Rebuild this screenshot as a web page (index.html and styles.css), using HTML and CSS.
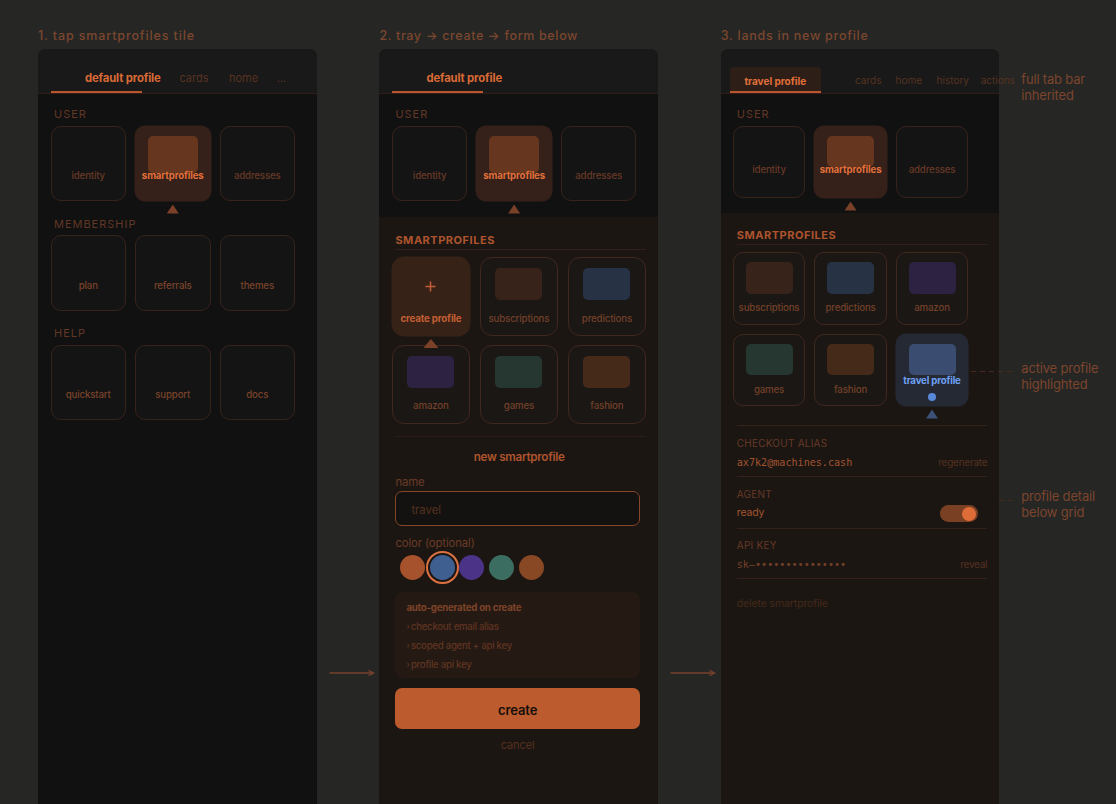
FILE: index.html
```html
<!DOCTYPE html>
<html lang="en">
<head>
<meta charset="utf-8">
<title>smartprofiles flow</title>
<link rel="stylesheet" href="styles.css">
</head>
<body>
<main class="board">
  <section class="step">
    <h2 class="step-title">1. tap smartprofiles tile</h2>
    <div class="phone">
      <nav class="tabs">
        <span class="tab tab-default">default profile</span>
        <span class="tab tab-a">cards</span>
        <span class="tab tab-b">home</span>
        <span class="tab tab-c">...</span>
      </nav>
      <h3 class="group">USER</h3>
      <div class="grid">
        <div class="tile"><span class="label">identity</span></div>
        <div class="tile hot"><i class="swatch"></i><span class="label">smartprofiles</span><i class="pointer"></i></div>
        <div class="tile"><span class="label">addresses</span></div>
      </div>
      <h3 class="group next">MEMBERSHIP</h3>
      <div class="grid bright">
        <div class="tile"><span class="label">plan</span></div>
        <div class="tile"><span class="label">referrals</span></div>
        <div class="tile"><span class="label">themes</span></div>
      </div>
      <h3 class="group next">HELP</h3>
      <div class="grid bright">
        <div class="tile"><span class="label">quickstart</span></div>
        <div class="tile"><span class="label">support</span></div>
        <div class="tile"><span class="label">docs</span></div>
      </div>
    </div>
  </section>

  <div class="connector"><svg width="46" height="10" viewBox="0 0 46 10"><path d="M0.5 5H44.5M39.5 2.3L44.8 5L39.5 7.7"/></svg></div>

  <section class="step">
    <h2 class="step-title tight">2. tray → create → form below</h2>
    <div class="phone">
      <nav class="tabs">
        <span class="tab tab-default">default profile</span>
      </nav>
      <h3 class="group">USER</h3>
      <div class="grid">
        <div class="tile"><span class="label">identity</span></div>
        <div class="tile hot"><i class="swatch"></i><span class="label">smartprofiles</span><i class="pointer"></i></div>
        <div class="tile"><span class="label">addresses</span></div>
      </div>
      <div class="tray">
        <h3 class="tray-title">SMARTPROFILES</h3>
        <div class="grid wide">
          <div class="tile create"><svg class="plus" width="11" height="11" viewBox="0 0 11 11"><path d="M5.5 0.5V10.5M0.5 5.5H10.5"/></svg><span class="label">create profile</span><i class="pointer"></i></div>
          <div class="tile"><i class="swatch rust"></i><span class="label">subscriptions</span></div>
          <div class="tile"><i class="swatch blue"></i><span class="label">predictions</span></div>
          <div class="tile row2"><i class="swatch violet"></i><span class="label">amazon</span></div>
          <div class="tile row2"><i class="swatch green"></i><span class="label">games</span></div>
          <div class="tile row2"><i class="swatch brown"></i><span class="label">fashion</span></div>
        </div>
        <form class="form">
          <h4 class="form-title">new smartprofile</h4>
          <div class="field-label">name</div>
          <div class="input">travel</div>
          <div class="field-label color-label">color (optional)</div>
          <div class="colors">
            <i class="dot c1"></i><i class="dot c2 picked"></i><i class="dot c3"></i><i class="dot c4"></i><i class="dot c5"></i>
          </div>
          <ul class="auto">
            <li class="auto-title">auto-generated on create</li>
            <li><i class="bullet">›</i>checkout email alias</li>
            <li><i class="bullet">›</i>scoped agent + api key</li>
            <li><i class="bullet">›</i>profile api key</li>
          </ul>
          <div class="submit">create</div>
          <div class="cancel">cancel</div>
        </form>
      </div>
    </div>
  </section>

  <div class="connector"><svg width="46" height="10" viewBox="0 0 46 10"><path d="M0.5 5H44.5M39.5 2.3L44.8 5L39.5 7.7"/></svg></div>

  <section class="step">
    <h2 class="step-title last">3. lands in new profile</h2>
    <div class="phone">
      <nav class="tabs compact">
        <span class="tab tab-travel">travel profile</span>
        <span class="tab tab-a">cards</span>
        <span class="tab tab-b">home</span>
        <span class="tab tab-c">history</span>
        <span class="tab tab-d">actions</span>
      </nav>
      <h3 class="group">USER</h3>
      <div class="grid small">
        <div class="tile"><span class="label">identity</span></div>
        <div class="tile hot"><i class="swatch"></i><span class="label">smartprofiles</span><i class="pointer"></i></div>
        <div class="tile"><span class="label">addresses</span></div>
      </div>
      <div class="tray short">
        <h3 class="tray-title">SMARTPROFILES</h3>
        <div class="grid small">
          <div class="tile"><i class="swatch rust"></i><span class="label">subscriptions</span></div>
          <div class="tile"><i class="swatch blue"></i><span class="label">predictions</span></div>
          <div class="tile"><i class="swatch violet"></i><span class="label">amazon</span></div>
          <div class="tile"><i class="swatch green"></i><span class="label">games</span></div>
          <div class="tile"><i class="swatch brown"></i><span class="label">fashion</span></div>
          <div class="tile active"><i class="swatch"></i><span class="label">travel profile</span><i class="status"></i><i class="pointer"></i><i class="leader"></i></div>
        </div>
        <div class="details">
          <div class="detail">
            <div class="key">CHECKOUT ALIAS</div>
            <div class="row"><span class="mono">ax7k2@machines.cash</span><span class="action">regenerate</span></div>
          </div>
          <div class="detail agent">
            <div class="key">AGENT</div>
            <div class="row"><span class="value">ready</span><span class="toggle"><i class="knob"></i></span></div>
          </div>
          <div class="detail api">
            <div class="key">API KEY</div>
            <div class="row"><span class="mono dim">sk–•••••••••••••••</span><span class="action">reveal</span></div>
          </div>
          <div class="delete">delete smartprofile</div>
        </div>
      </div>
    </div>
  </section>

  <aside class="notes">
    <p class="note n1">full tab bar<br>inherited</p>
    <p class="note n2">active profile<br>highlighted</p>
    <p class="note n3">profile detail<br>below grid</p>
  </aside>
</main>
</body>
</html>
```

FILE: styles.css
```css
* { box-sizing: border-box; margin: 0; padding: 0; }
html, body { width: 1116px; height: 804px; overflow: hidden; background: #262624; }
body { font-family: Inter, "Noto Sans", sans-serif; font-size: 10px; color: #6b3b26; }
i, b { font-style: normal; display: block; }
h2, h3, h4 { font-weight: 400; }
ul { list-style: none; }

.board { display: flex; height: 804px; padding-left: 38px; white-space: nowrap; }
.step { width: 278.5px; flex: none; display: flex; flex-direction: column; }
.step-title { height: 49px; flex: none; padding-top: 28px; line-height: 16px; font-size: 12.5px; font-weight: 500; letter-spacing: 0.87px; color: #7c472f; }
.step-title.tight { letter-spacing: 0.64px; }
.step-title.last { letter-spacing: 0.74px; }
.phone { flex: 1; background: #111; border-radius: 8px 8px 0 0; display: flex; flex-direction: column; }
.connector { width: 62.9px; flex: none; padding: 667.5px 0 0 12px; }
.connector svg { display: block; fill: none; stroke: #75422d; stroke-width: 1.3; }

/* tab bar */
.tabs { height: 45px; flex: none; display: flex; align-items: flex-end; background: #191919; border-bottom: 1px solid #321e17; border-radius: 8px 8px 0 0; padding-left: 13px; }
.tab { flex: none; text-align: center; font-size: 11px; line-height: 14px; padding-bottom: 8px; color: #573321; }
.tab-default { width: 91px; padding: 0 0 6px 34px; text-align: left; font-size: 11.3px; font-weight: 700; letter-spacing: -0.13px; color: #d96a36; border-bottom: 2px solid #b9562d; }
.tab-a { width: 52px; margin-left: 26px; }
.tab-b { width: 47px; }
.tab-c { width: 29px; }
.compact { padding-left: 9px; }
.compact .tab { font-size: 10px; padding-bottom: 6px; }
.compact .tab-travel { width: 91px; height: 26px; padding: 6.5px 0 0; font-weight: 700; color: #e2703a; background: #2d1e17; border-radius: 4px 4px 0 0; border-bottom: 2px solid #b9562d; }
.compact .tab-a { width: 41px; margin-left: 27px; }
.compact .tab-b { width: 40px; }
.compact .tab-c { width: 48px; }
.compact .tab-d { width: 42px; }

.group { height: 31.5px; flex: none; padding: 12.5px 0 0 16px; font-size: 11px; line-height: 15px; letter-spacing: 0.98px; color: #623726; }
.group.next { height: 34px; padding-top: 15.5px; }

/* tiles */
.grid { display: grid; grid-template-columns: repeat(3, 75.5px); gap: 9px; padding-left: 12.5px; }
.tile { position: relative; display: grid; height: 75.5px; border: 1px solid #38231b; border-radius: 10px; background: #141414; }
.tile > * { grid-area: 1 / 1; justify-self: center; }
.swatch { width: 50px; height: 37px; margin-top: 9px; border-radius: 5px; background: #67361f; }
.label { margin-top: 42.5px; line-height: 14px; font-size: 9.7px; font-weight: 500; letter-spacing: -0.15px; color: #673926; }
.bright .label { color: #79432a; }
.hot { border-color: #35211a; background: #35211a; box-shadow: 0 0 0 0.5px #35211a; }
.hot .label { font-weight: 700; letter-spacing: -0.15px; color: #e2703a; }
.pointer { position: absolute; z-index: 1; top: 78px; left: calc(50% - 6px); width: 12px; height: 9px; background: #7b4128; clip-path: polygon(50% 0, 100% 100%, 0 100%); }
.rust { background: #38231b; }
.blue { background: #283245; }
.violet { background: #2e2242; }
.green { background: #263731; }
.brown { background: #452a1a; }

/* tray */
.tray { flex: 1; margin-top: 15.5px; background: #1c1613; }
.tray-title { margin: 0 12px 7.5px 16px; height: 33px; padding-top: 16px; border-bottom: 1px solid #302019; font-size: 11px; line-height: 15px; font-weight: 700; letter-spacing: 0.52px; color: #ae542d; }
.tray .tile { background: #1a1714; border-color: #40281d; }
.tray .label { color: #734029; }
.wide { grid-template-columns: repeat(3, 78.5px); gap: 9.5px; padding-left: 12.3px; }
.wide .tile { height: 78.5px; border-radius: 12px; }
.wide .swatch, .small .swatch { width: 47px; height: 31.5px; margin-top: 10px; }
.wide .label { margin-top: 54px; }
.wide .row2 .label { margin-top: 53px; }
.tray .create { z-index: 1; background: #372218; border-color: #372218; box-shadow: 0 0 0 0.5px #372218; }
.tray .create .label { font-weight: 700; color: #c35f33; }
.plus { display: block; margin-top: 23px; fill: none; stroke: #c35f33; stroke-width: 1.5; }
.wide .pointer { top: 81px; width: 15px; left: calc(50% - 7.5px); }
.small { grid-template-columns: repeat(3, 72.5px); gap: 9px; padding-left: 12px; }
.small .tile { height: 72.5px; }
.small .swatch { margin-top: 9px; }
.small .label { margin-top: 36.5px; }
.small .pointer { top: 75px; }
.short .small .label { margin-top: 48px; }
.short { margin-top: 14.5px; }
.short .tray-title { padding-top: 15px; height: 32px; }
.tray .active { background: #252934; border-color: #252934; box-shadow: 0 0 0 0.5px #252934; }
.active .swatch { background: #3a4d70; }
.tray.short .active .label { margin-top: 39px; font-weight: 700; letter-spacing: -0.18px; color: #6ea1f5; }
.status { width: 8px; height: 8px; margin-top: 58px; border-radius: 50%; background: #5888d8; }
.active .pointer { background: #3c5078; }
.leader { position: absolute; left: 74px; top: 36px; width: 43px; height: 1px; background: repeating-linear-gradient(90deg, #45291f 0 5px, transparent 5px 9px); }

/* create form */
.form { margin: 12px 12px 0 16px; padding-top: 12.5px; border-top: 1px solid #2c1d17; }
.form-title { padding-right: 3px; text-align: center; font-size: 11.7px; line-height: 17px; font-weight: 600; letter-spacing: -0.3px; color: #ae542d; }
.field-label { margin-top: 9px; font-size: 11.3px; line-height: 15px; letter-spacing: -0.1px; color: #6b3b26; }
.input { margin-top: 0.5px; width: 244.5px; height: 35px; padding: 1px 0 0 15px; border: 1px solid #87452a; border-radius: 7px; background: #141210; font-size: 11.3px; line-height: 35px; color: #54311f; }
.color-label { margin-top: 10.5px; }
.colors { display: flex; gap: 4.8px; margin-top: 4px; padding-left: 4.5px; }
.dot { width: 25px; height: 25px; border-radius: 50%; }
.c1 { background: #a5522d; }
.c2 { background: #405f91; }
.c3 { background: #4b3388; }
.c4 { background: #3b6e60; }
.c5 { background: #874823; }
.picked { outline: 2px solid #dc7142; outline-offset: 2.5px; }
.auto { margin-top: 12px; width: 244.5px; height: 85.5px; padding: 6px 0 0 11px; border-radius: 8px; background: #251914; }
.auto li { display: flex; font-size: 9.7px; line-height: 19px; font-weight: 500; letter-spacing: -0.3px; color: #5f3420; }
.auto .auto-title { font-weight: 700; letter-spacing: -0.24px; color: #7c4328; }
.bullet { width: 4.5px; font-size: 8px; }
.submit { margin-top: 10.5px; width: 244.5px; height: 41px; border-radius: 7px; background: #bb5b2e; text-align: center; font-size: 13px; line-height: 44px; font-weight: 600; letter-spacing: -0.1px; color: #150e0a; }
.cancel { width: 244.5px; margin-top: 8px; text-align: center; font-size: 11px; line-height: 16px; letter-spacing: -0.1px; color: #56301f; }

/* profile details */
.details { margin: 18.5px 12px 0 16px; border-top: 1px solid #35211a; }
.detail { height: 51.5px; padding-top: 10px; border-bottom: 1px solid #35211a; }
.key { line-height: 14px; letter-spacing: 0.23px; color: #653826; }
.row { display: flex; justify-content: space-between; margin-top: 5px; line-height: 15px; }
.mono { font-family: "DejaVu Sans Mono", monospace; font-size: 10.1px; color: #a3542f; }
.mono.dim { color: #744029; }
.value { font-size: 10.5px; letter-spacing: -0.15px; line-height: 14px; color: #a3542f; }
.action { letter-spacing: -0.25px; color: #54301f; }
.agent { padding-top: 9.5px; }
.toggle { width: 38px; height: 17px; margin: -0.5px 9px 0 0; padding: 1.5px 2px; border-radius: 9px; background: #7a4023; }
.knob { width: 14px; height: 14px; margin-left: auto; border-radius: 50%; background: #de6c38; }
.api { height: 50px; padding-top: 9.5px; }
.delete { margin-top: 16.5px; font-size: 10.5px; line-height: 17px; letter-spacing: -0.12px; color: #452919; }

/* margin notes */
.notes { padding-left: 22px; font-size: 13px; line-height: 16px; letter-spacing: -0.18px; color: #7c452d; }
.n1 { margin-top: 71px; }
.n2 { margin-top: 256.5px; }
.n3 { position: relative; margin-top: 96px; }
.n3::before { content: ""; position: absolute; left: -22px; top: 12px; width: 14px; height: 1px; background: repeating-linear-gradient(90deg, #45291f 0 5px, transparent 5px 9px); }
```
